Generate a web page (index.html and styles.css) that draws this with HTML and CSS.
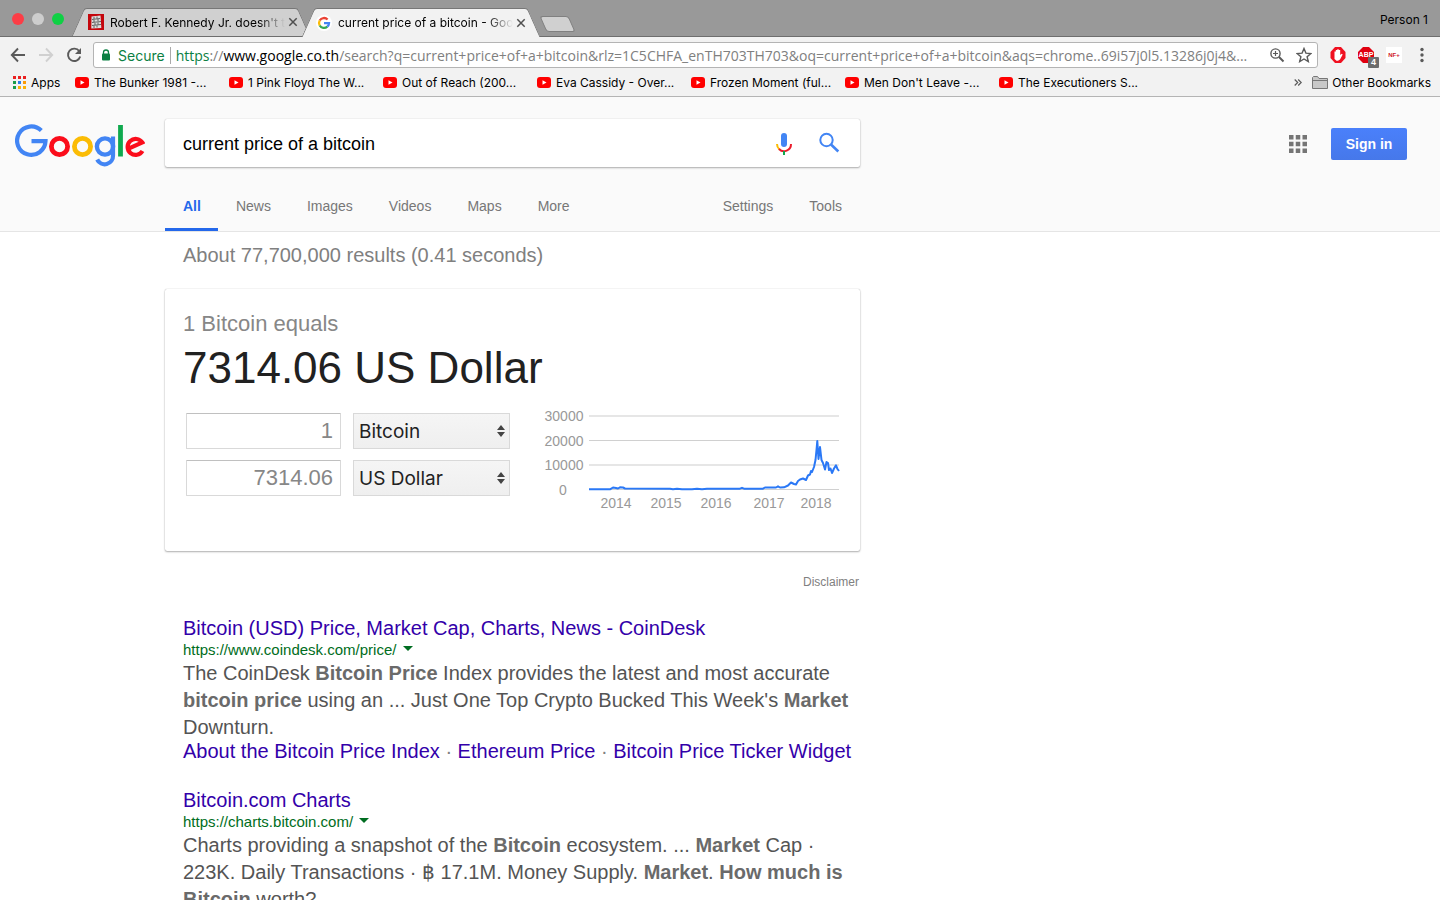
FILE: index.html
```html
<!DOCTYPE html>
<html lang="en">
<head>
    <meta charset="utf-8">
    <title>current price of a bitcoin - Google Search</title>
    <link rel="stylesheet" href="styles.css">
</head>
<body>
    <!-- shared icons -->
    <svg class="defs" aria-hidden="true">
        <symbol id="yt" viewBox="0 0 14 11">
            <rect width="14" height="11" rx="3" fill="#f00"/>
            <path d="M5.5 3.2v4.6l4-2.3z" fill="#fff"/>
        </symbol>
        <symbol id="close" viewBox="0 0 10 10">
            <path d="M1.3 1.3l7.4 7.4M8.7 1.3L1.3 8.7" stroke="#505050" stroke-width="1.5"/>
        </symbol>
    </svg>

    <div class="tabstrip">
        <div class="lights">
            <span class="light red"></span>
            <span class="light grey"></span>
            <span class="light green"></span>
        </div>
        <div class="tab">
            <svg class="favicon" viewBox="0 0 16 16">
                <rect width="16" height="16" fill="#c4060c"/>
                <path d="M3.5 2.5l9-1 .8 12.5-10 .5z" fill="#ddd"/>
                <path d="M4 5.5l8-1M4 8.5l9-1M4 11.5l9-1M6 3v2M9 2.5v2M6 6v2M10 5v2M7 9v2M10 8.5v2M6 12v2M9 11.5v2" stroke="#444" stroke-width=".8" fill="none"/>
            </svg>
            <span class="tab-title">Robert F. Kennedy Jr. doesn't think</span>
            <button class="tab-close" aria-label="Close tab"><svg><use href="#close"/></svg></button>
        </div>
        <div class="tab active">
            <svg class="favicon" viewBox="0 0 16 16">
                <circle cx="8" cy="8" r="8" fill="#fff"/>
                <g fill="none" stroke-width="2.3">
                    <path d="M3.7 5.5A5 5 0 0 1 11.6 4.5" stroke="#ea4335"/>
                    <path d="M3.7 5.5A5 5 0 0 0 3.7 10.5" stroke="#fbbc05"/>
                    <path d="M3.7 10.5A5 5 0 0 0 11.3 11.7" stroke="#34a853"/>
                    <path d="M11.3 11.7A5 5 0 0 0 13 8.2H8" stroke="#4285f4"/>
                </g>
            </svg>
            <span class="tab-title">current price of a bitcoin - Google Search</span>
            <button class="tab-close" aria-label="Close tab"><svg><use href="#close"/></svg></button>
        </div>
        <button class="new-tab" aria-label="New tab"></button>
        <span class="person">Person 1</span>
    </div>

    <div class="toolbar">
        <button class="tool" aria-label="Back">
            <svg viewBox="0 0 16 16"><path d="M15 8H2M8 1.5L1.8 8 8 14.5" fill="none" stroke="#5a5a5a" stroke-width="1.9"/></svg>
        </button>
        <button class="tool" aria-label="Forward">
            <svg viewBox="0 0 16 16"><path d="M1 8h13M8 1.5L14.2 8 8 14.5" fill="none" stroke="#d0d0d0" stroke-width="1.9"/></svg>
        </button>
        <button class="tool" aria-label="Reload">
            <svg viewBox="0 0 16 16"><path d="M13.3 4.2A6.2 6.2 0 1 0 14.2 9.5" fill="none" stroke="#5a5a5a" stroke-width="1.9"/><path d="M15 1v6H9z" fill="#5a5a5a"/></svg>
        </button>
        <div class="omnibox">
            <svg class="lock" viewBox="0 0 10 12"><path d="M2.5 5V3.5a2.5 2.5 0 0 1 5 0V5" fill="none" stroke="#0b8043" stroke-width="1.3"/><rect x="1" y="4.5" width="8" height="7" rx="1" fill="#0b8043"/></svg>
            <span class="secure">Secure</span>
            <span class="url"><span class="scheme">https</span>://<span class="host">www.google.co.th</span>/search?q=current+price+of+a+bitcoin&amp;rlz=1C5CHFA_enTH703TH703&amp;oq=current+price+of+a+bitcoin&amp;aqs=chrome..69i57j0l5.13286j0j4&amp;...</span>
            <button class="tool" aria-label="Zoom">
                <svg viewBox="0 0 16 16"><circle cx="6.5" cy="6.5" r="4.6" fill="none" stroke="#5a5a5a" stroke-width="1.4"/><path d="M10 10l4.5 4.5" stroke="#5a5a5a" stroke-width="1.9"/><path d="M4 6.5h5M6.5 4v5" stroke="#5a5a5a" stroke-width="1.2"/></svg>
            </button>
            <button class="tool" aria-label="Bookmark this page">
                <svg viewBox="0 0 16 16"><path d="M8 1.5l1.9 4.6 5 .4-3.8 3.2 1.2 4.9L8 12l-4.3 2.6 1.2-4.9L1.1 6.5l5-.4z" fill="none" stroke="#5a5a5a" stroke-width="1.4"/></svg>
            </button>
        </div>
        <button class="tool" aria-label="AdBlock">
            <svg viewBox="0 0 16 16"><path d="M5 0h6l4.5 5v6L11 16H5L.5 11V5z" fill="#f01020"/><path d="M4.5 9V4.500h1.300V3h1.500V2.200h1.400V3h1.500v5l1.500-1.300 1 .8L10 12.500l-2 1.300H6.500L4.500 12z" fill="#fff"/></svg>
        </button>
        <button class="tool abp" aria-label="Adblock Plus">
            <svg viewBox="0 0 16 16"><path d="M5 0h6l5 5v6l-5 5H5l-5-5V5z" fill="#e00010"/><text x="8" y="10" text-anchor="middle" class="abp-text">ABP</text></svg>
            <span class="badge">4</span>
        </button>
        <button class="nf">NF+</button>
        <button class="tool" aria-label="Menu">
            <svg viewBox="0 0 16 16" fill="#5a5a5a"><circle cx="8" cy="2.5" r="1.7"/><circle cx="8" cy="8" r="1.7"/><circle cx="8" cy="13.5" r="1.7"/></svg>
        </button>
    </div>

    <div class="bookmarks">
        <a href="#" class="apps">
            <svg viewBox="0 0 13 13">
                <path d="M0 0h3v3H0zM5 0h3v3H5zM10 0h3v3h-3z" fill="#ea2020"/>
                <path d="M0 5h3v3H0z" fill="#1a9c4a"/><path d="M5 5h3v3H5z" fill="#2a7de8"/><path d="M10 5h3v3h-3z" fill="#fb9a05"/>
                <path d="M0 10h3v3H0z" fill="#1a9c4a"/><path d="M5 10h3v3H5zM10 10h3v3h-3z" fill="#fbb205"/>
            </svg>Apps</a>
        <a href="#" class="bookmark"><svg><use href="#yt"/></svg>The Bunker 1981 -...</a>
        <a href="#" class="bookmark"><svg><use href="#yt"/></svg>1 Pink Floyd The W...</a>
        <a href="#" class="bookmark"><svg><use href="#yt"/></svg>Out of Reach (200...</a>
        <a href="#" class="bookmark"><svg><use href="#yt"/></svg>Eva Cassidy - Over...</a>
        <a href="#" class="bookmark"><svg><use href="#yt"/></svg>Frozen Moment (ful...</a>
        <a href="#" class="bookmark"><svg><use href="#yt"/></svg>Men Don't Leave -...</a>
        <a href="#" class="bookmark"><svg><use href="#yt"/></svg>The Executioners S...</a>
        <button class="more-marks" aria-label="More bookmarks">
            <svg viewBox="0 0 8 7"><path d="M.7.5l3 3-3 3M4.2.5l3 3-3 3" fill="none" stroke="#5a5a5a" stroke-width="1.2"/></svg>
        </button>
        <a href="#" class="other">
            <svg viewBox="0 0 16 13"><path d="M.5 12.5v-11l1-1h4l1.5 2h8.500v10z" fill="#c8c8c8" stroke="#777"/><path d="M.5 4.500h15" stroke="#777"/></svg>Other Bookmarks</a>
    </div>

    <div class="page">
        <header class="header">
            <div class="search-row">
                <a href="#" class="logo" aria-label="Google">
                    <svg viewBox="0 0 130 44" fill="none" stroke-width="4.8">
                        <path d="M26.3 7.6A14.2 14.2 0 1 0 30.5 18.2H16.5" stroke="#4285f4" stroke-width="4.2"/>
                        <circle cx="44.5" cy="23.5" r="8.1" stroke="#fb0d1b"/>
                        <circle cx="67.5" cy="23.5" r="8.1" stroke="#fbbc05"/>
                        <circle cx="90" cy="23.5" r="8.1" stroke="#4285f4" stroke-width="4.4"/>
                        <path d="M98 13.5v19a8.3 8.3 0 0 1-15.8 4" stroke="#4285f4" stroke-width="4.2"/>
                        <path d="M105.5 2v31.5" stroke="#0fa94e"/>
                        <path d="M127.5 28A8 8 0 1 1 127.3 19.5L113 25.8" stroke="#fb0d1b" stroke-width="4.2"/>
                    </svg>
                </a>
                <form class="searchbox">
                    <input type="text" class="query" aria-label="Search" value="current price of a bitcoin">
                    <button type="button" class="icon-btn" aria-label="Search by voice">
                        <svg viewBox="0 0 22 24">
                            <rect x="8" y="2" width="6" height="14" rx="3" fill="#4285f4"/>
                            <path d="M4 13a7 7 0 0 0 2.5 5.4" fill="none" stroke="#fbbc05" stroke-width="2"/>
                            <path d="M6 18a7 7 0 0 0 12-5" fill="none" stroke="#ea1c2c" stroke-width="2"/>
                            <path d="M11 20v4" stroke="#0fa94e" stroke-width="2"/>
                        </svg>
                    </button>
                    <button type="button" class="icon-btn" aria-label="Google Search">
                        <svg viewBox="0 0 22 24"><circle cx="8.5" cy="9" r="6.2" fill="none" stroke="#4285f4" stroke-width="2"/><path d="M13 13.5l7.3 7" stroke="#4285f4" stroke-width="2.6"/></svg>
                    </button>
                </form>
                <div class="account">
                    <button class="apps-grid" aria-label="Google apps">
                        <svg viewBox="0 0 18 18" fill="#757575"><path d="M0 0h4.500v4.500H0zM6.750 0h4.500v4.500h-4.500zM13.500 0H18v4.500h-4.500zM0 6.750h4.500v4.500H0zM6.750 6.750h4.500v4.500h-4.500zM13.500 6.750H18v4.500h-4.500zM0 13.500h4.500V18H0zM6.750 13.500h4.500V18h-4.500zM13.500 13.500H18V18h-4.500z"/></svg>
                    </button>
                    <a href="#" class="signin">Sign in</a>
                </div>
            </div>
            <nav class="nav">
                <a href="#" class="current">All</a>
                <a href="#">News</a>
                <a href="#">Images</a>
                <a href="#">Videos</a>
                <a href="#">Maps</a>
                <a href="#">More</a>
                <a href="#" class="settings">Settings</a>
                <a href="#">Tools</a>
            </nav>
        </header>

        <main class="content">
            <div class="stats">About 77,700,000 results (0.41 seconds)</div>

            <section class="card">
                <div class="equals">1 Bitcoin equals</div>
                <div class="amount">7314.06 US Dollar</div>
                <div class="converter">
                    <div class="fields">
                        <input type="text" aria-label="Amount from" value="1">
                        <div class="select-wrap">
                            <select aria-label="Currency from"><option>Bitcoin</option><option>US Dollar</option></select>
                            <svg viewBox="0 0 8 12" fill="#444"><path d="M4 0l4 5H0zM4 12l4-5H0z"/></svg>
                        </div>
                        <input type="text" aria-label="Amount to" value="7314.06">
                        <div class="select-wrap">
                            <select aria-label="Currency to"><option>US Dollar</option><option>Bitcoin</option></select>
                            <svg viewBox="0 0 8 12" fill="#444"><path d="M4 0l4 5H0zM4 12l4-5H0z"/></svg>
                        </div>
                    </div>
                    <svg class="chart" viewBox="0 0 300 108" role="img" aria-label="Bitcoin price in US Dollar">
                        <path d="M49 8h250M49 57h250" stroke="#e6e6e6" stroke-width="2"/>
                        <path d="M49 32.5h250M49 81.5h250" stroke="#d0d0d0"/>
                        <g text-anchor="middle">
                            <text x="24" y="13">30000</text>
                            <text x="24" y="38">20000</text>
                            <text x="24" y="62">10000</text>
                            <text x="23" y="87">0</text>
                            <text x="76" y="100">2014</text>
                            <text x="126" y="100">2015</text>
                            <text x="176" y="100">2016</text>
                            <text x="229" y="100">2017</text>
                            <text x="276" y="100">2018</text>
                        </g>
                        <polyline points="49,81.3 70,81.3 73,79.5 76,80 78,80.5 80,79.3 83,79.5 85,80.5 130,80.7 133,81.3 137,80.7 142,81.3 152,81.3 157,80.7 162,81.3 167,80.7 200,80.7 202,79.8 204,80.7 223,80.7 225,79.5 236,79.5 238,78.3 240,79.5 244,79.3 248,77.5 251,74.5 254,76 256,76.5 258,73 260,71.5 263,70.5 266,72 268,67.5 270,66.5 271,63 272,64 274,59 275.5,52 276.5,42 277.3,33 278.5,51 280,39 281.5,52 283,55 285,61.5 286.5,54 288,55 289,62 290.5,60.5 292,65 294,60.5 296,57.3 297.5,61 299,63" fill="none" stroke="#2a78f6" stroke-width="2" stroke-linejoin="round"/>
                    </svg>
                </div>
            </section>
            <a href="#" class="disclaimer">Disclaimer</a>

            <article class="result">
                <h3><a href="#">Bitcoin (USD) Price, Market Cap, Charts, News - CoinDesk</a></h3>
                <cite>https://www.coindesk.com/price/ <span class="arrow"></span></cite>
                <p>The CoinDesk <b>Bitcoin Price</b> Index provides the latest and most accurate <b>bitcoin price</b> using an ... Just One Top Crypto Bucked This Week's <b>Market</b> Downturn.</p>
                <div class="sublinks"><a href="#">About the Bitcoin Price Index</a> · <a href="#">Ethereum Price</a> · <a href="#">Bitcoin Price Ticker Widget</a></div>
            </article>

            <article class="result">
                <h3><a href="#">Bitcoin.com Charts</a></h3>
                <cite>https://charts.bitcoin.com/ <span class="arrow"></span></cite>
                <p>Charts providing a snapshot of the <b>Bitcoin</b> ecosystem. ... <b>Market</b> Cap · 223K. Daily Transactions · ฿ 17.1M. Money Supply. <b>Market</b>. <b>How much is Bitcoin</b> worth?</p>
            </article>
        </main>
    </div>
</body>
</html>
```
FILE: styles.css
```css
* {
    box-sizing: border-box;
}

body {
    margin: 0;
    height: 100vh;
    display: flex;
    flex-direction: column;
    overflow: hidden;
    background: #fff;
    font-family: "Liberation Sans", Arial, sans-serif;
}

button {
    border: 0;
    padding: 0;
    background: none;
}

a {
    text-decoration: none;
}

svg {
    display: block;
}

.defs {
    display: none;
}

/* browser tabs */
.tabstrip {
    flex: none;
    height: 37px;
    display: flex;
    align-items: flex-end;
    background: #999;
    border-bottom: 1px solid #6e6e6e;
    font-family: Inter, sans-serif;
    font-size: 12px;
}

.lights {
    display: flex;
    gap: 8px;
    padding: 0 16px 11px 12px;
}

.light {
    width: 12px;
    height: 12px;
    border-radius: 50%;
}

.red {
    background: #fc3d46;
}

.grey {
    background: #cdcdcd;
}

.green {
    background: #0fd044;
}

.tab {
    position: relative;
    display: flex;
    align-items: center;
    width: 226px;
    height: 28px;
    padding: 0 3px 0 10px;
    margin-left: -2px;
}

.tab::before,
.tab::after {
    content: "";
    position: absolute;
    z-index: 0;
    top: 0;
    bottom: 0;
    background: #d0d0d0;
    border-top: 1px solid #777;
}

/* slanted sides, the two halves overlap in the middle */
.tab::before {
    left: 0;
    right: 40%;
    border-left: 1px solid #777;
    border-top-left-radius: 3px;
    transform: skewX(-24deg);
}

.tab::after {
    left: 40%;
    right: 0;
    border-right: 1px solid #777;
    border-top-right-radius: 3px;
    transform: skewX(24deg);
}

.tab.active {
    z-index: 1;
    height: 29px;
    padding: 0 5px 0 8px;
    margin: 0 0 -1px 4px;
}

.tab.active::before,
.tab.active::after {
    background: #f2f2f2;
}

.tab > * {
    position: relative;
    z-index: 1;
}

.favicon {
    flex: none;
    width: 16px;
    height: 16px;
}

.tab-title {
    flex: 1;
    min-width: 0;
    margin-left: 6px;
    overflow: hidden;
    white-space: nowrap;
    mask-image: linear-gradient(to right, #000 85%, transparent);
}

.tab-close {
    width: 10px;
    height: 10px;
    margin: 0 3px;
}

.tab-close svg {
    width: 10px;
    height: 10px;
}

.new-tab {
    width: 29px;
    height: 16px;
    margin: 0 0 4px 9px;
    background: #d0d0d0;
    border: 1px solid #808080;
    border-radius: 3px;
    transform: skewX(24deg);
}

.person {
    margin-left: auto;
    padding: 0 12px 9px 0;
    font-size: 12px;
}

/* toolbar */
.toolbar {
    flex: none;
    display: flex;
    align-items: center;
    gap: 12px;
    height: 36px;
    padding: 0 10px;
    background: #f2f2f2;
}

.tool svg {
    width: 16px;
    height: 16px;
}

.omnibox {
    flex: 1;
    min-width: 0;
    height: 26px;
    display: flex;
    align-items: center;
    gap: 11px;
    padding: 0 5px 0 7px;
    margin-left: -1px;
    background: #fff;
    border: 1px solid #b4b4b4;
    border-radius: 3px;
    font-family: Inter, sans-serif;
    font-size: 14px;
}

.lock {
    flex: none;
    width: 10px;
    height: 12px;
}

.secure {
    padding-right: 5px;
    margin-left: -4px;
    border-right: 1px solid #aaa;
    color: #0b8043;
}

.url {
    flex: 1;
    min-width: 0;
    margin-left: -6px;
    overflow: hidden;
    white-space: nowrap;
    color: #808080;
    font-family: "Open Sans", sans-serif;
}

.scheme {
    color: #0b8043;
}

.host {
    color: #000;
}

.abp {
    position: relative;
}

.abp-text {
    fill: #fff;
    font: bold 7px "Liberation Sans", sans-serif;
}

.badge {
    position: absolute;
    right: -5px;
    bottom: -5px;
    width: 11px;
    height: 11px;
    background: #6c6c6c;
    border-radius: 1px;
    color: #fff;
    font: bold 9px/11px "Liberation Sans", sans-serif;
}

.nf {
    width: 16px;
    height: 16px;
    background: #fff;
    color: #d0202c;
    font: bold 6px "Liberation Sans", sans-serif;
}

/* bookmarks bar */
.bookmarks {
    flex: none;
    display: flex;
    align-items: center;
    height: 24px;
    padding: 0 9px 4px 13px;
    background: #f2f2f2;
    border-bottom: 1px solid #b4b4b4;
    font-family: Inter, sans-serif;
    font-size: 12px;
}

.bookmarks a {
    display: flex;
    align-items: center;
    gap: 5px;
    color: #000;
    white-space: nowrap;
}

.apps {
    width: 62px;
}

.apps svg {
    width: 13px;
    height: 13px;
}

.bookmark {
    width: 154px;
}

.bookmark svg {
    width: 14px;
    height: 11px;
}

.more-marks {
    margin: 0 10px 0 auto;
}

.more-marks svg {
    width: 8px;
    height: 7px;
}

.bookmarks .other {
    gap: 4px;
}

.other svg {
    width: 16px;
    height: 13px;
}

/* search header */
.page {
    flex: 1;
    min-height: 0;
    overflow: hidden;
}

.header {
    background: #fafafa;
    border-bottom: 1px solid #e5e5e5;
}

.search-row {
    display: flex;
    align-items: center;
    padding: 22px 33px 15px 15px;
}

.logo {
    width: 150px;
    padding-top: 4px;
}

.logo svg {
    width: 130px;
    height: 44px;
}

.searchbox {
    display: flex;
    align-items: center;
    width: 695px;
    height: 48px;
    padding: 0 20px 0 18px;
    background: #fff;
    border-radius: 2px;
    box-shadow: 0 1px 2px rgba(0, 0, 0, 0.3), 0 0 1px rgba(0, 0, 0, 0.25);
}

.query {
    flex: 1;
    border: 0;
    padding: 2px 0 0;
    outline: 0;
    color: #000;
    font: 18px "Liberation Sans", Arial, sans-serif;
}

.icon-btn {
    margin-left: 23px;
}

.icon-btn svg {
    width: 22px;
    height: 24px;
}

.account {
    display: flex;
    align-items: center;
    gap: 24px;
    margin-left: auto;
    padding-top: 2px;
}

.apps-grid svg {
    width: 18px;
    height: 18px;
}

.signin {
    width: 76px;
    background: linear-gradient(#4a80fb, #4678ea);
    border-radius: 2px;
    color: #fff;
    font-size: 14px;
    font-weight: bold;
    line-height: 32px;
    text-align: center;
}

.nav {
    display: flex;
    width: 695px;
    margin-left: 165px;
}

.nav a {
    height: 49px;
    padding: 0 18px;
    color: #777;
    font-size: 14px;
    line-height: 48px;
}

.nav .current {
    padding: 0 17px 0 18px;
    border-bottom: 3px solid #2468eb;
    color: #2468eb;
    font-weight: bold;
}

.nav .settings {
    margin-left: auto;
}

/* results */
.content {
    width: 695px;
    margin-left: 165px;
}

.stats {
    padding: 11px 18px 21px;
    color: #808080;
    font-size: 20px;
    line-height: 25px;
}

.card {
    height: 262px;
    padding: 21px 18px;
    border-radius: 2px;
    box-shadow: 0 1px 2px rgba(0, 0, 0, 0.3), 0 0 1px rgba(0, 0, 0, 0.3);
}

.equals {
    color: #878787;
    font-size: 22px;
    line-height: 28px;
}

.amount {
    color: #212121;
    font-size: 44px;
    line-height: 60px;
}

.converter {
    display: flex;
    justify-content: space-between;
    align-items: flex-start;
    padding: 15px 2px 0 3px;
}

.fields {
    display: grid;
    grid-template-columns: 155px 157px;
    gap: 11px 12px;
}

.fields input {
    height: 36px;
    padding: 0 7px;
    border: 1px solid #d9d9d9;
    border-top-color: #c0c0c0;
    border-radius: 1px;
    color: #878787;
    font: 22px "Liberation Sans", Arial, sans-serif;
    text-align: right;
    width: 100%;
}

.select-wrap {
    position: relative;
}

.select-wrap select {
    appearance: none;
    width: 100%;
    height: 36px;
    padding: 0 5px;
    background: linear-gradient(#f5f5f5, #efefef);
    border: 1px solid #d9d9d9;
    color: #222;
    font: 19px Inter, sans-serif;
}

.select-wrap svg {
    position: absolute;
    right: 5px;
    top: 12px;
    width: 8px;
    height: 12px;
    pointer-events: none;
}

.chart {
    width: 300px;
    height: 108px;
    margin-top: -5px;
}

.chart text {
    fill: #999;
    font: 14px "Liberation Sans", Arial, sans-serif;
}

.disclaimer {
    display: block;
    padding: 23px 1px 25px;
    color: #808080;
    font-size: 12px;
    line-height: 17px;
    text-align: right;
}

.result {
    width: 694px;
    padding: 0 0 27px 18px;
}

.result h3 {
    margin: 0;
    font-size: 20px;
    font-weight: normal;
    line-height: 24px;
}

.result a {
    color: #30a;
}

.result cite {
    display: block;
    color: #006d21;
    font-size: 15px;
    font-style: normal;
    line-height: 20px;
}

.arrow {
    display: inline-block;
    margin: 0 0 4px 2px;
    border: 5px solid transparent;
    border-top-color: #006d21;
    border-bottom: 0;
}

.result p {
    margin: 0;
    color: #545454;
    font-size: 20px;
    line-height: 27px;
}

.result b {
    color: #6a6a6a;
}

.sublinks {
    color: #808080;
    font-size: 20px;
    line-height: 20px;
    white-space: nowrap;
}
```
